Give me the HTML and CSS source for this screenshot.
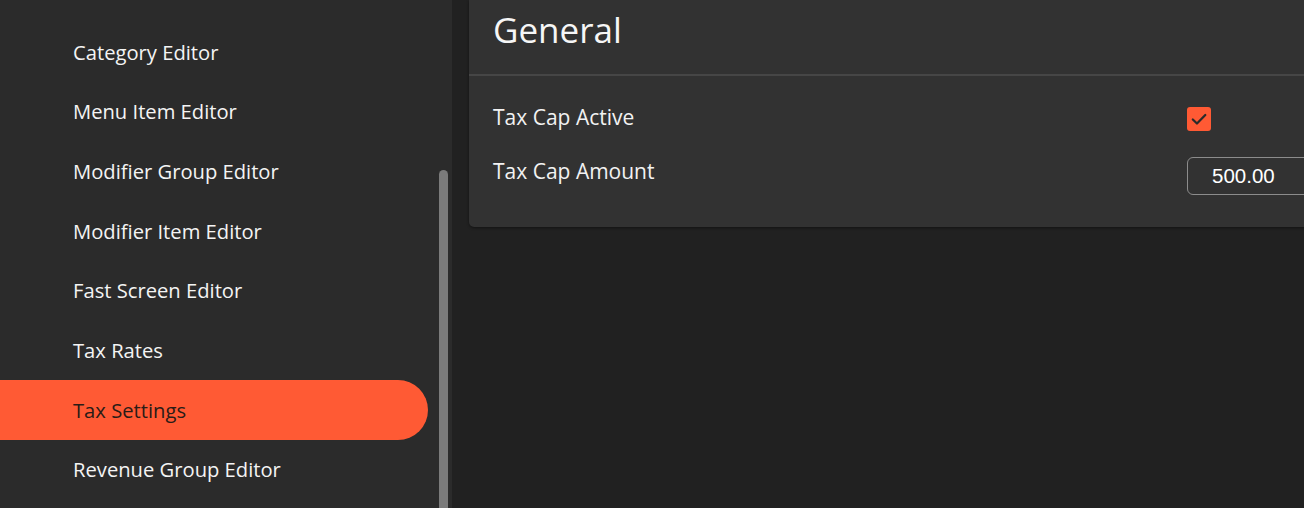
FILE: index.html
```html
<!DOCTYPE html>
<html lang="en">
<head>
<meta charset="utf-8">
<title>Tax Settings</title>
<link rel="stylesheet" href="styles.css">
</head>
<body>
<div class="app">
  <aside class="sidebar">
    <nav class="nav">
      <a class="nav-item">Menu Editor</a>
      <a class="nav-item">Category Editor</a>
      <a class="nav-item">Menu Item Editor</a>
      <a class="nav-item">Modifier Group Editor</a>
      <a class="nav-item">Modifier Item Editor</a>
      <a class="nav-item">Fast Screen Editor</a>
      <a class="nav-item">Tax Rates</a>
      <a class="nav-item active">Tax Settings</a>
      <a class="nav-item">Revenue Group Editor</a>
    </nav>
    <div class="scrollbar"><div class="thumb"></div></div>
  </aside>
  <main class="main">
    <section class="card">
      <header class="card-header"><h1>General</h1></header>
      <div class="card-body">
        <div class="row">
          <span class="label">Tax Cap Active</span>
          <span class="checkbox">
            <svg width="18" height="18" viewBox="0 0 16 16"><path d="M2.5 8.4 L6.2 12 L13.6 4.4" fill="none" stroke="#2b2b2b" stroke-width="2" stroke-linecap="round" stroke-linejoin="round"/></svg>
          </span>
        </div>
        <div class="row second">
          <span class="label">Tax Cap Amount</span>
          <input class="amount" type="text" value="500.00">
        </div>
      </div>
    </section>
  </main>
</div>
</body>
</html>
```
FILE: styles.css
```css
* { box-sizing: border-box; }
html, body { margin: 0; padding: 0; }
body {
  width: 1304px;
  height: 508px;
  overflow: hidden;
  background: #212121;
  font-family: "Open Sans", Lato, sans-serif;
  color: #f2f2f2;
}
.app {
  display: flex;
  height: 508px;
}
.sidebar {
  width: 452px;
  flex: none;
  background: #2b2b2b;
  position: relative;
  overflow: hidden;
}
.nav {
  display: flex;
  flex-direction: column;
  margin-top: -38px;
  width: 428px;
}
.nav-item {
  height: 59.7px;
  display: flex;
  align-items: center;
  padding-left: 73px;
  font-size: 20.2px;
  color: #f4f4f4;
  flex: none;
}
.nav-item.active {
  background: #ff5a34;
  color: #2a1c17;
  border-radius: 0 30px 30px 0;
}
.scrollbar {
  position: absolute;
  top: 0;
  right: 0;
  width: 16px;
  height: 508px;
  background: #2b2b2b;
}
.thumb {
  position: absolute;
  left: 3px;
  top: 170px;
  width: 9px;
  height: 360px;
  border-radius: 5px;
  background: #7b7b7b;
}
.main {
  flex: 1;
  padding-left: 17px;
  min-width: 0;
}
.card {
  width: 900px;
  height: 227px;
  background: #323232;
  border-radius: 0 0 0 5px;
  box-shadow: 0 1px 3px rgba(0,0,0,0.45);
}
.card-header {
  height: 76px;
  border-bottom: 2px solid #464646;
  padding-left: 24px;
  display: flex;
  align-items: flex-start;
}
.card-header h1 {
  margin: 7px 0 0;
  font-size: 35px;
  font-weight: 400;
  line-height: 46px;
  color: #f6f6f6;
}
.card-body {
  padding: 16px 0 0 24px;
}
.row {
  display: flex;
  height: 51px;
}
.label {
  width: 694px;
  font-size: 21px;
  line-height: 28px;
  color: #f2f2f2;
  padding-top: 11px;
}
.second .label { padding-top: 14px; }
.checkbox {
  width: 24px;
  height: 24px;
  border-radius: 3px;
  background: #ff5a34;
  display: flex;
  align-items: center;
  justify-content: center;
  margin-top: 15px;
}
.amount {
  width: 130px;
  height: 38px;
  background: transparent;
  border: 1.5px solid #8c8c8c;
  border-radius: 6px;
  color: #ffffff;
  font-family: "Liberation Sans", Arial, sans-serif;
  font-size: 20.5px;
  padding: 0 0 0 24px;
  outline: none;
  margin-top: 14px;
}
```
